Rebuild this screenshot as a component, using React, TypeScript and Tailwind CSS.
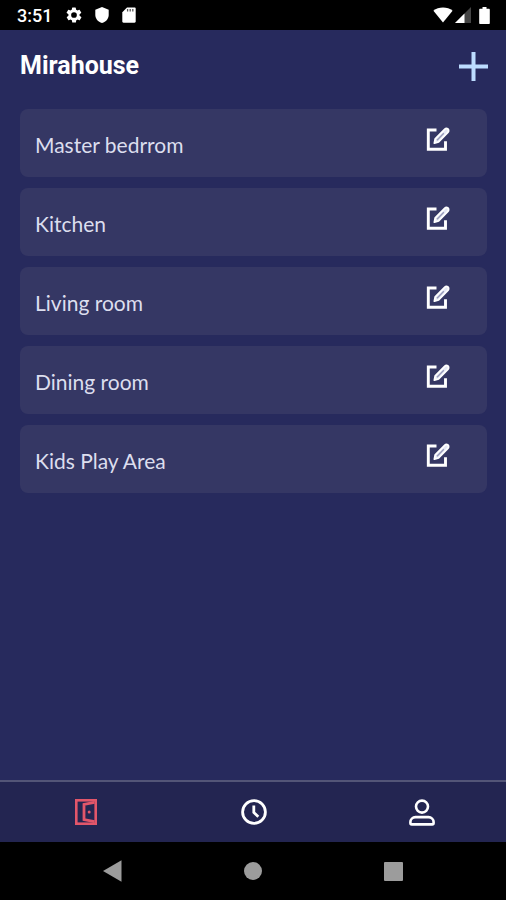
import { useState } from "react";
import type { ReactNode } from "react";

type Room = {
  id: number;
  name: string;
};

type TabType = "rooms" | "schedule" | "profile";

const rooms: Room[] = [
  { id: 1, name: "Master bedrrom" },
  { id: 2, name: "Kitchen" },
  { id: 3, name: "Living room" },
  { id: 4, name: "Dining room" },
  { id: 5, name: "Kids Play Area" },
];

const tabs: { id: TabType; label: string; icon: ReactNode }[] = [
  { id: "rooms", label: "Rooms", icon: <DoorIcon /> },
  { id: "schedule", label: "Schedule", icon: <ClockIcon /> },
  { id: "profile", label: "Profile", icon: <PersonIcon /> },
];

function DoorIcon() {
  return (
    <svg width="22" height="26" viewBox="0 0 22 26" fill="none" stroke="currentColor">
      <rect x="1.3" y="1.3" width="19.4" height="23.4" strokeWidth="2.6" />
      <path d="M19.5 3.4 9 5.4v15.2l10.500 2" strokeWidth="2.8" />
      <circle cx="14.2" cy="13" r="1.5" fill="currentColor" stroke="none" />
    </svg>
  );
}

function ClockIcon() {
  return (
    <svg width="26" height="26" viewBox="0 0 26 26" fill="none" stroke="currentColor" strokeWidth="2.8">
      <circle cx="13" cy="13" r="11.4" />
      <path d="M12.8 6.5v6.9l4.5 4.3" />
    </svg>
  );
}

function PersonIcon() {
  return (
    <svg width="26" height="27" viewBox="0 0 26 27" fill="none" stroke="currentColor" strokeWidth="2.6">
      <circle cx="13" cy="7.6" r="6" />
      <path
        d="M6.500 18.100h13c2.800 0 5.100 2.300 5.100 5v.9c0 .8-.5 1.400-1.300 1.400H2.700c-.8 0-1.300-.6-1.300-1.400v-.9c0-2.700 2.300-5 5.100-5Z"
        strokeLinejoin="round"
      />
    </svg>
  );
}

function EditIcon() {
  return (
    <svg width="26" height="26" viewBox="0 0 26 26" fill="none">
      <path d="M11.5 4H3.3v19.2h17.2v-8" stroke="#fff" strokeWidth="2.9" />
      <path
        d="m10.2 12.9 9.4-9.6c1-1 2.3-1.2 3.3-.3s.9 2.3 0 3.3l-9.3 9.7-4.2 1.2Z"
        fill="#e6e8f5"
        stroke="#fff"
        strokeWidth="1.8"
        strokeLinejoin="round"
      />
      <path d="m12 14.3 6.8-7" stroke="#9699b8" strokeWidth="1.3" />
    </svg>
  );
}

function StatusBar() {
  return (
    <div className="flex h-[30px] items-center justify-between bg-black pr-4 pl-[17px] text-white">
      <div className="flex items-center">
        <span className="w-12 pt-[2px] text-lg font-medium">3:51</span>
        <svg width="18" height="18" viewBox="0 0 24 24" fill="currentColor">
          <path d="M19.4 13a7.500 7.500 0 0 0 0-2l2.100-1.600a.5.5 0 0 0 .1-.7l-2-3.400a.5.5 0 0 0-.6-.2l-2.500 1a7.500 7.500 0 0 0-1.700-1l-.4-2.600a.5.5 0 0 0-.5-.5h-4a.5.5 0 0 0-.5.5l-.4 2.600a7.500 7.500 0 0 0-1.700 1l-2.500-1a.5.5 0 0 0-.6.2l-2 3.400a.5.5 0 0 0 .1.7L4.600 11a7.500 7.500 0 0 0 0 2l-2.100 1.600a.5.5 0 0 0-.1.7l2 3.400a.5.5 0 0 0 .6.2l2.500-1a7.500 7.500 0 0 0 1.700 1l.4 2.600a.5.5 0 0 0 .5.5h4a.5.5 0 0 0 .5-.5l.4-2.600a7.500 7.500 0 0 0 1.700-1l2.500 1a.5.5 0 0 0 .6-.2l2-3.400a.5.5 0 0 0-.1-.7ZM12 15.800a3.800 3.800 0 1 1 0-7.600 3.800 3.800 0 0 1 0 7.600Z" />
        </svg>
        <svg className="ml-3" width="14" height="16" viewBox="0 0 14 16" fill="currentColor">
          <path d="M7 0 .3 2.700v5C.3 11.500 3 15 7 16c4-1 6.700-4.500 6.700-8.300v-5Z" />
        </svg>
        <svg className="ml-[13px]" width="14" height="16" viewBox="0 0 14 16">
          <path d="M5 .5h7.500c.7 0 1.200.5 1.200 1.200v12.800c0 .7-.5 1.200-1.200 1.200h-11c-.7 0-1.200-.5-1.200-1.200V5.200Z" fill="currentColor" />
          <path d="M5.600 2v2.600M8.200 2v2.600M10.800 2v2.600" stroke="#555" strokeWidth="1.300" />
        </svg>
      </div>
      <div className="flex items-center">
        <svg width="20" height="16" viewBox="0 0 20 16" fill="currentColor">
          <path d="M10 15.500.4 3.700C3 1.600 6.300.5 10 .5s7 1.100 9.600 3.200Z" />
        </svg>
        <svg className="ml-[2px]" width="16" height="16" viewBox="0 0 16 16">
          <path d="M0 16 16 0v16Z" fill="#444" />
          <path d="M0 16 9.500 6.500V16Z" fill="currentColor" />
        </svg>
        <svg className="ml-2" width="11" height="17" viewBox="0 0 11 17" fill="currentColor">
          <path d="M3.500 0h4v1.800h2.300c.6 0 1 .4 1 1V16c0 .6-.4 1-1 1H1.200c-.6 0-1-.4-1-1V2.800c0-.6.4-1 1-1h2.300Z" />
        </svg>
      </div>
    </div>
  );
}

function RoomCard(props: { room: Room }) {
  const { room } = props;

  return (
    <li className="flex h-[68px] items-center justify-between rounded-lg bg-[#353764] pr-9 pl-[15px]">
      <span className="pt-[3px] font-[Lato,sans-serif] text-[21px] leading-7 text-[#dcdeee]">
        {room.name}
      </span>
      <button
        type="button"
        aria-label={`Edit ${room.name}`}
        className="mb-2 cursor-pointer"
      >
        <EditIcon />
      </button>
    </li>
  );
}

function SystemNavigation() {
  return (
    <div className="grid h-[58px] grid-cols-[1fr_56px_1fr] items-center bg-black text-[#9c9c9c]">
      <button type="button" aria-label="Back" className="mr-[103px] justify-self-end">
        <svg width="19" height="22" viewBox="0 0 19 22" fill="currentColor">
          <path d="M0 11 18.500.3v21.400Z" />
        </svg>
      </button>
      <button type="button" aria-label="Home" className="justify-self-center">
        <svg width="18" height="18" viewBox="0 0 18 18" fill="currentColor">
          <circle cx="9" cy="9" r="9" />
        </svg>
      </button>
      <button type="button" aria-label="Recent apps" className="ml-[103px] justify-self-start">
        <svg width="19" height="19" viewBox="0 0 19 19" fill="currentColor">
          <rect width="19" height="19" rx="1" />
        </svg>
      </button>
    </div>
  );
}

function App() {
  const [activeTab, setActiveTab] = useState<TabType>("rooms");

  return (
    <div className="flex min-h-screen flex-col bg-[#272a5d] font-[Roboto,sans-serif]">
      <StatusBar />

      <header className="flex h-[72px] items-center justify-between pr-[18px] pl-5">
        <h1 className="text-[25px] leading-8 font-bold text-white">Mirahouse</h1>
        <button type="button" aria-label="Add room" className="cursor-pointer">
          <svg width="29" height="29" viewBox="0 0 29 29" stroke="#bcdcff" strokeWidth="4">
            <path d="M14.500 0v29M0 14.500h29" />
          </svg>
        </button>
      </header>

      <main className="grow pt-[7px] pr-[19px] pl-5">
        <ul className="flex flex-col gap-[11px]">
          {rooms.map((room) => (
            <RoomCard key={room.id} room={room} />
          ))}
        </ul>
      </main>

      <nav className="grid h-[62px] grid-cols-3 border-t-2 border-[#535577] bg-[#232551] pl-[2px]">
        {tabs.map((tab) => (
          <button
            key={tab.id}
            type="button"
            aria-label={tab.label}
            onClick={() => setActiveTab(tab.id)}
            className={`flex cursor-pointer items-center justify-center ${
              activeTab === tab.id ? "text-[#e2566a]" : "text-white"
            }`}
          >
            {tab.icon}
          </button>
        ))}
      </nav>

      <SystemNavigation />
    </div>
  );
}

export default App;
